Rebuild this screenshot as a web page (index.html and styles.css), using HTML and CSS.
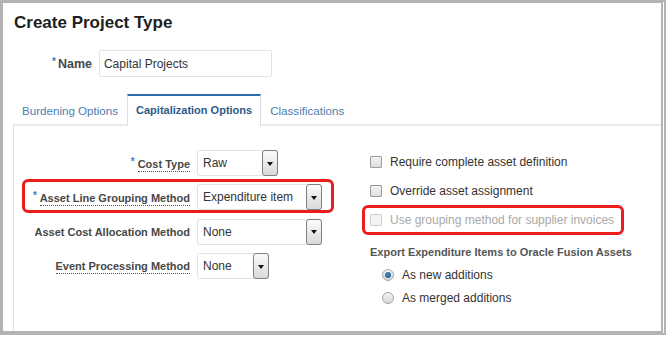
FILE: index.html
```html
<!DOCTYPE html>
<html>
<head>
<meta charset="utf-8">
<link rel="stylesheet" href="styles.css">
</head>
<body>
<div class="frame">
  <h1 class="title">Create Project Type</h1>
  <div class="name-row">
    <label class="name-label"><span class="req req-name">*</span>Name</label>
    <div class="text-input">Capital Projects</div>
  </div>
  <div class="tabs">
    <div class="tab">Burdening Options</div>
    <div class="tab active">Capitalization Options</div>
    <div class="tab">Classifications</div>
  </div>
  <div class="panel">
    <div class="form-grid">
      <label class="flabel"><span class="req">*</span> <span class="ul">Cost Type</span></label>
      <div class="select w-raw"><span class="val">Raw</span><span class="btn"><i class="tri"></i></span></div>

      <label class="flabel"><span class="req">*</span> <span class="ul">Asset Line Grouping Method</span></label>
      <div class="select w-long"><span class="val">Expenditure item</span><span class="btn"><i class="tri"></i></span></div>

      <label class="flabel">Asset Cost Allocation Method</label>
      <div class="select w-long"><span class="val">None</span><span class="btn"><i class="tri"></i></span></div>

      <label class="flabel"><span class="ul">Event Processing Method</span></label>
      <div class="select w-short"><span class="val">None</span><span class="btn"><i class="tri"></i></span></div>
    </div>

    <div class="right-col">
      <div class="check-row"><span class="checkbox"></span><span>Require complete asset definition</span></div>
      <div class="check-row"><span class="checkbox"></span><span>Override asset assignment</span></div>
      <div class="check-row disabled"><span class="checkbox"></span><span>Use grouping method for supplier invoices</span></div>
      <div class="group-label">Export Expenditure Items to Oracle Fusion Assets</div>
      <div class="radio-list">
        <div class="radio-row"><span class="radio on"></span><span>As new additions</span></div>
        <div class="radio-row"><span class="radio"></span><span>As merged additions</span></div>
      </div>
    </div>

    <div class="annot annot-left"></div>
    <div class="annot annot-right"></div>
  </div>
</div>
</body>
</html>
```
FILE: styles.css
```css
* { box-sizing: border-box; }
html, body { margin: 0; padding: 0; background: #fff; }
body { font-family: "Liberation Sans", Arial, sans-serif; color: #333; }

.frame {
  width: 666px;
  height: 335px;
  border-top: 3px solid #b3b3b3;
  border-left: 3px solid #b3b3b3;
  border-bottom: 4px solid #b3b3b3;
  border-right: 5px double #b3b3b3;
  display: flex;
  flex-direction: column;
  background: #fff;
}

.title {
  margin: 0;
  padding: 10px 0 0 11px;
  font-size: 17px;
  line-height: 20px;
  font-weight: bold;
  color: #1e1e1e;
}

.name-row {
  display: flex;
  align-items: center;
  margin-top: 17px;
  padding-left: 49px;
  gap: 7px;
}
.name-label {
  font-size: 12.5px;
  font-weight: bold;
  color: #484848;
}
.req {
  color: #3b7bc6;
  font-size: 10px;
  vertical-align: 3px;
  font-weight: bold;
}
.req-name { margin-right: 2px; }
.text-input {
  width: 173px;
  height: 27px;
  border: 1px solid #dfe4ea;
  border-radius: 2px;
  padding-left: 4px;
  display: flex;
  align-items: center;
  font-size: 12px;
  color: #333;
}

.tabs {
  display: flex;
  margin-top: 17px;
  margin-left: 10px;
}
.tab {
  height: 30px;
  padding: 0 8px;
  display: flex;
  align-items: center;
  font-size: 11.6px;
  font-weight: normal;
  color: #4d7db0;
  border-top: 2px solid transparent;
  border-left: 1px solid transparent;
  border-right: 1px solid transparent;
}
.tab.active {
  font-size: 11px;
  font-weight: bold;
  color: #2b5a8a;
  border-top-color: #2f6cb2;
  border-left-color: #d8dfe7;
  border-right-color: #d8dfe7;
  background: #fff;
  height: 32px;
  margin-bottom: -2px;
  padding-bottom: 2px;
  position: relative;
  z-index: 1;
}

.panel {
  flex: 1;
  margin-left: 10px;
  border-top: 2px solid #e7ebef;
  border-left: 1px solid #dbe4ee;
  display: flex;
  position: relative;
}

.form-grid {
  display: grid;
  grid-template-columns: 176px 125px;
  grid-auto-rows: 26px;
  column-gap: 7px;
  row-gap: 8.4px;
  padding-top: 24px;
  align-items: center;
}
.flabel {
  justify-self: end;
  font-size: 11px;
  font-weight: bold;
  color: #474747;
  white-space: nowrap;
}
.ul {
  border-bottom: 1px dotted #555;
  padding-bottom: 1px;
}

.select {
  height: 26px;
  border: 1px solid #dfe4ea;
  border-radius: 2px;
  display: flex;
  align-items: stretch;
  background: #fff;
}
.w-raw { width: 81px; }
.w-long { width: 125px; }
.w-short { width: 72px; }
.val {
  flex: 1;
  display: flex;
  align-items: center;
  padding-left: 5px;
  font-size: 12px;
  color: #333;
  white-space: nowrap;
}
.btn {
  width: 16px;
  margin: -1px -1px -1px 0;
  border: 1px solid #7f7f7f;
  border-radius: 3px;
  background: linear-gradient(#fbfbfb, #d9d9d9);
  display: flex;
  align-items: center;
  justify-content: center;
}
.tri {
  width: 0;
  height: 0;
  border-left: 3.5px solid transparent;
  border-right: 3.5px solid transparent;
  border-top: 4px solid #111;
  margin-top: 1px;
}

.right-col {
  margin-left: 48px;
  padding-top: 21px;
  display: flex;
  flex-direction: column;
}
.check-row {
  height: 29px;
  display: flex;
  align-items: center;
  gap: 8px;
  font-size: 12px;
  color: #333;
  white-space: nowrap;
}
.checkbox {
  width: 12px;
  height: 12px;
  border: 1px solid #9b9b9b;
  border-radius: 1px;
  background: linear-gradient(#f4f4f4, #dedede);
  flex: none;
}
.check-row.disabled { color: #a9a9a9; }
.check-row.disabled .checkbox {
  border-color: #cfcfcf;
  background: #f3f3f3;
}

.group-label {
  margin-top: 12px;
  font-size: 11px;
  font-weight: bold;
  color: #555;
  white-space: nowrap;
}
.radio-list {
  padding-left: 12px;
  margin-top: 5px;
}
.radio-row {
  height: 23px;
  display: flex;
  align-items: center;
  gap: 8px;
  font-size: 12px;
  color: #333;
}
.radio {
  width: 12px;
  height: 12px;
  border-radius: 50%;
  border: 1px solid #a5a5a5;
  background: linear-gradient(#f4f4f4, #d8d8d8);
  flex: none;
  display: flex;
  align-items: center;
  justify-content: center;
}
.radio.on::after {
  content: "";
  width: 6px;
  height: 6px;
  border-radius: 50%;
  background: radial-gradient(circle at 40% 35%, #4a8ad0, #1d4f86);
}

.annot {
  position: absolute;
  border: 3px solid #ec1c1c;
  border-radius: 6px;
  pointer-events: none;
}
.annot-left { left: 8px; top: 53px; width: 312px; height: 34px; }
.annot-right { left: 348px; top: 79px; width: 262px; height: 30px; }
```
